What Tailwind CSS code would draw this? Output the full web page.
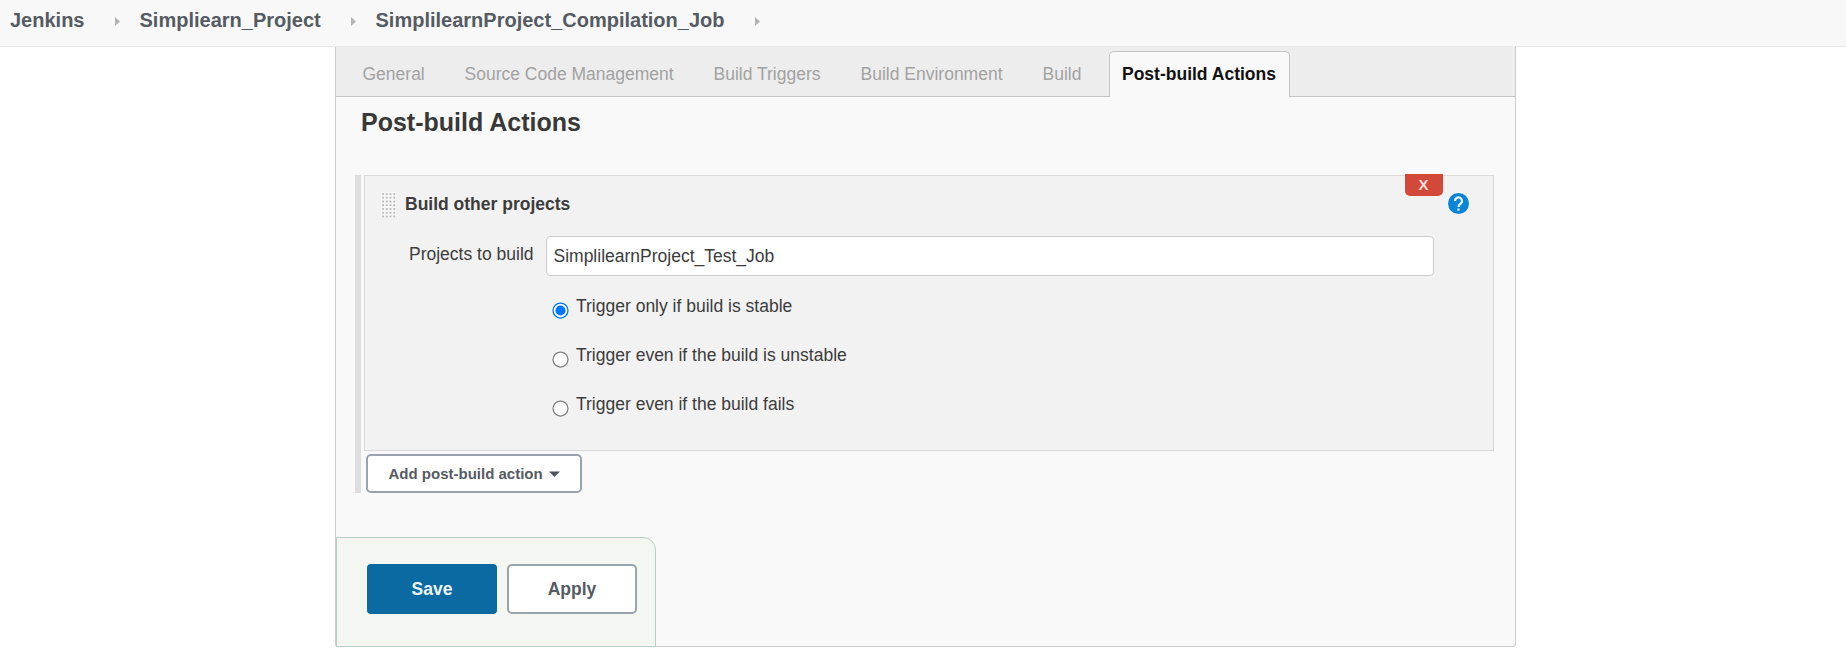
<!DOCTYPE html>
<html lang="en">
<head>
<meta charset="utf-8">
<title>SimplilearnProject_Compilation_Job Config [Jenkins]</title>
<script src="https://cdn.jsdelivr.net/npm/@tailwindcss/browser@4"></script>
</head>
<body class="bg-white h-[665px] overflow-hidden font-['Liberation_Sans',Arial,sans-serif] text-[17.5px] leading-[20px] text-[#3c3c3c]">
  <!-- Breadcrumbs -->
  <header class="h-[47px] bg-[#f8f8f8] border-b border-[#e8e8e8] flex items-start pt-[9px] pl-[10px] text-[20px] leading-[22px] font-bold text-[#555b63]">
    <a class="w-[75px]">Jenkins</a>
    <svg class="ml-[30px] mt-[8px] w-[5px] h-[9px]" viewBox="0 0 5 9"><path d="M0 0L5 4.5L0 9Z" fill="#b4b4b4"/></svg>
    <a class="ml-[19.5px] w-[181.5px]">Simpliearn_Project</a>
    <svg class="ml-[30px] mt-[8px] w-[5px] h-[9px]" viewBox="0 0 5 9"><path d="M0 0L5 4.5L0 9Z" fill="#b4b4b4"/></svg>
    <a class="ml-[19.5px] w-[349.5px]">SimplilearnProject_Compilation_Job</a>
    <svg class="ml-[30px] mt-[8px] w-[5px] h-[9px]" viewBox="0 0 5 9"><path d="M0 0L5 4.5L0 9Z" fill="#b4b4b4"/></svg>
  </header>

  <main class="ml-[335px] w-[1181px] h-[600px] bg-[#f9f9f9] border border-t-0 border-[#ccc] rounded-b-[3px] flex flex-col">
    <!-- Section tabs -->
    <nav class="h-[50px] shrink-0 bg-[#ededed] border-b border-[#c4c4c4] flex items-start text-[#a2a2a2]">
      <a class="mt-[17px] ml-[26.5px] w-[102px] whitespace-nowrap">General</a>
      <a class="mt-[17px] w-[249px] whitespace-nowrap">Source Code Management</a>
      <a class="mt-[17px] w-[147px] whitespace-nowrap">Build Triggers</a>
      <a class="mt-[17px] w-[182px] whitespace-nowrap">Build Environment</a>
      <a class="mt-[17px] w-[66.5px] whitespace-nowrap">Build</a>
      <a class="mt-[4px] h-[46px] w-[181px] bg-[#f9f9f9] border border-b-0 border-[#c4c4c4] rounded-t-[5px] pt-[12px] pl-[12px] font-bold text-[#111] whitespace-nowrap">Post-build Actions</a>
    </nav>

    <h1 class="mt-[11px] ml-[25px] text-[25px] leading-[28px] font-bold text-[#383838]">Post-build Actions</h1>

    <div class="mt-[39px] ml-[19px] h-[318px] shrink-0 flex">
      <div class="w-[6px] bg-[#ddd]"></div>
      <div class="ml-[3px]">
        <section class="w-[1130px] h-[276px] bg-[#f2f2f2] border border-[#d9d9d9]">
          <div class="flex items-start h-[60px]">
            <svg class="ml-[16px] mt-[16px] w-[15px] h-[26px]" viewBox="0 0 15 26">
              <defs><pattern id="grip" width="3.75" height="3.75" patternUnits="userSpaceOnUse"><rect width="3.75" height="3.75" fill="#f8f8f8"/><rect x="1.2" y="1.2" width="1.7" height="1.7" fill="#aaa"/></pattern></defs>
              <rect width="15" height="26" fill="url(#grip)"/>
            </svg>
            <h2 class="ml-[9px] mt-[18px] font-bold w-[999.5px]">Build other projects</h2>
            <button class="-mt-[2px] w-[38px] h-[22px] shrink-0 bg-[#d24939] rounded-b-[5px] text-[15px] leading-[22px] font-bold text-[#f9dedb]">X</button>
            <svg class="ml-[5px] mt-[17px] w-[21px] h-[21px] shrink-0" viewBox="0 0 21 21"><circle cx="10.5" cy="10.5" r="10.5" fill="#0a84d6"/><path d="M7 8a3.5 3.5 0 1 1 5.6 2.7C11.3 11.7 10.5 12.3 10.5 14" fill="none" stroke="#eaf5fc" stroke-width="2.2"/><rect x="9.3" y="15.5" width="2.3" height="2.2" fill="#d5ebfa"/></svg>
          </div>
          <div class="flex items-start">
            <label class="ml-[44px] mt-[8px] w-[137px] whitespace-nowrap">Projects to build</label>
            <div class="w-[888px] h-[40px] bg-white border border-[#ccc] rounded-[4px] pt-[9px] pl-[6.5px]">SimplilearnProject_Test_Job</div>
          </div>
          <!-- Trigger condition -->
          <div class="ml-[187px] mt-[20px] flex flex-col gap-[29px]">
            <label class="flex h-[20px]"><svg class="mt-[6px] w-[17px] h-[17px] shrink-0" viewBox="0 0 17 17"><circle cx="8.5" cy="8.5" r="7.5" fill="#fff" stroke="#0075ff" stroke-width="1.25"/><circle cx="8.5" cy="8.5" r="5" fill="#0075ff"/></svg><span class="ml-[7px]">Trigger only if build is stable</span></label>
            <label class="flex h-[20px]"><svg class="mt-[6px] w-[17px] h-[17px] shrink-0" viewBox="0 0 17 17"><circle cx="8.5" cy="8.5" r="7.5" fill="#fff" stroke="#808080" stroke-width="1.25"/></svg><span class="ml-[7px]">Trigger even if the build is unstable</span></label>
            <label class="flex h-[20px]"><svg class="mt-[6px] w-[17px] h-[17px] shrink-0" viewBox="0 0 17 17"><circle cx="8.5" cy="8.5" r="7.5" fill="#fff" stroke="#808080" stroke-width="1.25"/></svg><span class="ml-[7px]">Trigger even if the build fails</span></label>
          </div>
        </section>
        <button class="mt-[3px] ml-[2px] w-[216px] h-[39px] bg-white border-2 border-[#98a3ad] rounded-[5px] flex items-center pl-[20.5px] text-[15px] leading-[17px] font-bold text-[#555b63] whitespace-nowrap">Add post-build action<svg class="ml-[6px] w-[11px] h-[6px]" viewBox="0 0 11 6"><path d="M0 0.5H11L5.5 6Z" fill="#4d545d"/></svg></button>
      </div>
    </div>

    <!-- Save bar -->
    <footer class="mt-[44px] w-[320px] h-[110px] -mb-px shrink-0 bg-[#f4f7f1] border border-[#b5d0c2] rounded-tr-[13px] flex pt-[26px] pl-[30px] gap-[10px]">
      <button class="w-[130px] h-[50px] bg-[#0b6aa2] rounded-[4px] font-bold text-[#eef6fb]">Save</button>
      <button class="w-[130px] h-[50px] bg-white border-2 border-[#98a3ad] rounded-[5px] font-bold text-[#555b63]">Apply</button>
    </footer>
  </main>
</body>
</html>
